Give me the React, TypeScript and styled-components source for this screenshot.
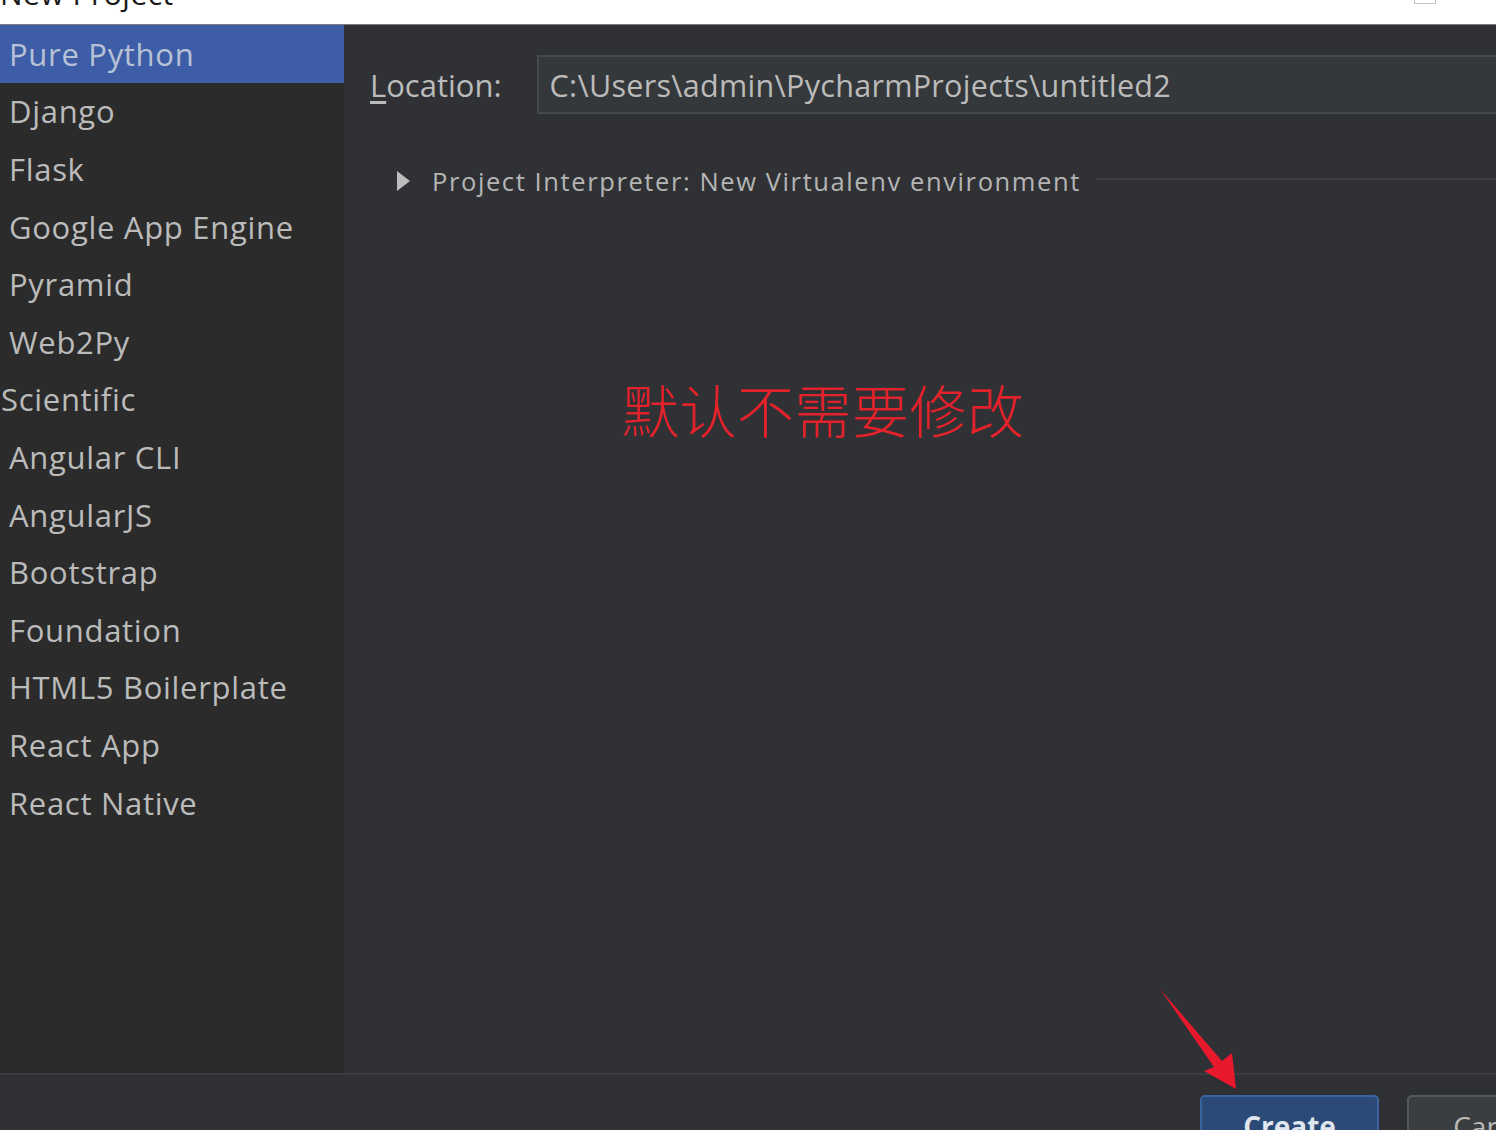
import React from 'react';
import styled, { createGlobalStyle } from 'styled-components';

const GlobalStyle = createGlobalStyle`
  html, body {
    margin: 0;
    padding: 0;
    background: #ffffff;
  }
  body {
    font-family: "Open Sans", "Noto Sans", "Liberation Sans", sans-serif;
  }
`;

const Window = styled.div`
  position: relative;
  width: 1496px;
  height: 1130px;
  overflow: hidden;
  display: flex;
  flex-direction: column;
  background: #2f3033;
`;

const TitleBar = styled.div`
  height: 24px;
  flex-shrink: 0;
  background: #ffffff;
  border-bottom: 1px solid #7d7d7d;
  display: flex;
  justify-content: space-between;
  align-items: flex-end;
  overflow: hidden;
`;

const TitleText = styled.div`
  font-size: 30px;
  line-height: 30px;
  letter-spacing: 0.5px;
  color: #1a1a1a;
  margin-bottom: 15px;
`;

const WindowControl = styled.div`
  width: 22px;
  height: 10px;
  margin: -6px 60px 0 0;
  align-self: flex-start;
  border: 1px solid #c4c4c4;
  box-sizing: border-box;
`;

const Body = styled.div`
  display: flex;
  height: 1048px;
  flex-shrink: 0;
`;

const Sidebar = styled.div`
  width: 344px;
  flex-shrink: 0;
  background: #2b2b2b;
  display: flex;
  flex-direction: column;
`;

const SideItem = styled.div<{ $selected?: boolean; $flush?: boolean }>`
  height: 57.6px;
  display: flex;
  align-items: center;
  padding-left: ${(p) => (p.$flush ? '1px' : '9px')};
  font-size: 31px;
  letter-spacing: 0.7px;
  color: ${(p) => (p.$selected ? '#b8c2d6' : '#bbbbbb')};
  background: ${(p) => (p.$selected ? '#3d5ea6' : 'transparent')};
  white-space: nowrap;
`;

const Main = styled.div`
  flex: 1;
  background: #303134;
  padding: 30px 0 0 26px;
  display: flex;
  flex-direction: column;
  min-width: 0;
`;

const LocationRow = styled.div`
  display: flex;
  align-items: center;
  gap: 35px;
`;

const Label = styled.label`
  font-size: 31px;
  color: #bbbbbb;
  white-space: nowrap;
  span {
    text-decoration: underline;
    text-underline-offset: 4px;
  }
`;

const PathInput = styled.div`
  flex: 1;
  height: 59px;
  box-sizing: border-box;
  margin-right: -10px;
  background: #35383a;
  border: 2px solid #46494b;
  display: flex;
  align-items: center;
  padding-left: 11px;
  font-size: 30.5px;
  letter-spacing: 0.3px;
  color: #bbbbbb;
  white-space: nowrap;
`;

const InterpreterRow = styled.div`
  display: flex;
  align-items: center;
  margin-top: 50px;
  padding-left: 27px;
`;

const Triangle = styled.div`
  width: 0;
  height: 0;
  border-top: 10px solid transparent;
  border-bottom: 10px solid transparent;
  border-left: 13px solid #bdbdbd;
  margin-right: 22px;
`;

const InterpreterText = styled.div`
  font-size: 25.5px;
  letter-spacing: 1.6px;
  color: #b5b5b5;
  white-space: nowrap;
`;

const Rule = styled.div`
  flex: 1;
  height: 2px;
  background: #3d3f42;
  margin-left: 16px;
  margin-top: -4px;
`;

const Note = styled.div`
  margin: 182px 0 0 252px;
  font-family: "Noto Sans CJK SC", sans-serif;
  font-weight: 300;
  font-size: 57px;
  line-height: 1;
  color: #e3222b;
  letter-spacing: 0.5px;
`;

const Footer = styled.div`
  flex: 1;
  border-top: 2px solid #3a3c3f;
  background: #2f3033;
  display: flex;
  justify-content: flex-end;
  gap: 28px;
  padding: 20px 0 0 0;
  margin-right: -90px;
`;

const Button = styled.div<{ $primary?: boolean }>`
  width: 179px;
  height: 56px;
  box-sizing: border-box;
  border-radius: 5px;
  border: 2px solid ${(p) => (p.$primary ? '#3a64a0' : '#55585b')};
  background: ${(p) => (p.$primary ? '#2b4a78' : '#3b3e41')};
  color: ${(p) => (p.$primary ? '#e0e6ee' : '#bbbbbb')};
  font-size: 28px;
  font-weight: ${(p) => (p.$primary ? 700 : 400)};
  display: flex;
  justify-content: center;
  padding-top: 10px;
`;

const Arrow = styled.svg`
  position: absolute;
  left: 1150px;
  top: 985px;
  width: 100px;
  height: 110px;
`;

const items = [
  'Pure Python',
  'Django',
  'Flask',
  'Google App Engine',
  'Pyramid',
  'Web2Py',
  'Scientific',
  'Angular CLI',
  'AngularJS',
  'Bootstrap',
  'Foundation',
  'HTML5 Boilerplate',
  'React App',
  'React Native',
];

export default function App() {
  return (
    <>
      <GlobalStyle />
      <Window>
        <TitleBar>
          <TitleText>New Project</TitleText>
          <WindowControl />
        </TitleBar>
        <Body>
          <Sidebar>
            {items.map((it, i) => (
              <SideItem key={it} $selected={i === 0} $flush={it === 'Scientific'}>
                {it}
              </SideItem>
            ))}
          </Sidebar>
          <Main>
            <LocationRow>
              <Label>
                <span>L</span>ocation:
              </Label>
              <PathInput>C:\Users\admin\PycharmProjects\untitled2</PathInput>
            </LocationRow>
            <InterpreterRow>
              <Triangle />
              <InterpreterText>Project Interpreter: New Virtualenv environment</InterpreterText>
              <Rule />
            </InterpreterRow>
            <Note>默认不需要修改</Note>
          </Main>
        </Body>
        <Footer>
          <Button $primary>Create</Button>
          <Button>Cancel</Button>
        </Footer>
        <Arrow viewBox="0 0 100 110">
          <path d="M10 4 L64 82 L54 86 L86 104 L82 68 L72 76 Z" fill="#e8192c" />
        </Arrow>
      </Window>
    </>
  );
}
